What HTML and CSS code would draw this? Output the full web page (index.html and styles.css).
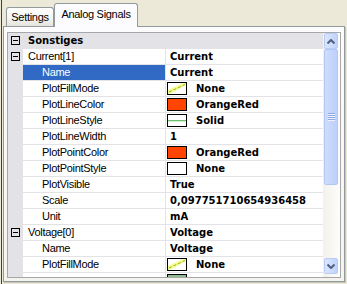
FILE: index.html
```html
<!DOCTYPE html>
<html lang="de">
<head>
  <meta charset="UTF-8">
  <title>Analog Signals</title>
  <link rel="stylesheet" href="styles.css">
</head>
<body>
  <div class="window">
    <!-- Tabs -->
    <div class="tabs">
      <div class="tab">Settings</div>
      <div class="tab active">Analog Signals</div>
    </div>

    <div class="tab-page">
      <div class="prop-grid">
        <div class="rows">
          <div class="row category">
            <div class="margin"><span class="glyph"></span></div>
            <div class="cat-name">Sonstiges</div>
          </div>

          <div class="row">
            <div class="margin"><span class="glyph"></span></div>
            <div class="name parent">Current[1]</div>
            <div class="value">Current</div>
          </div>
          <div class="row">
            <div class="margin"></div>
            <div class="name selected">Name</div>
            <div class="value">Current</div>
          </div>
          <div class="row">
            <div class="margin"></div>
            <div class="name">PlotFillMode</div>
            <div class="value">
              <span class="swatch">
                <svg width="18" height="11" viewBox="0 0 18 11"><polygon points="0,7 15,0 18,0 18,2 2,11 0,11" fill="#f3fb8a"/><line x1="1" y1="9" x2="17" y2="1.5" stroke="#9aae3c" stroke-dasharray="3 2"/></svg>
              </span>None
            </div>
          </div>
          <div class="row">
            <div class="margin"></div>
            <div class="name">PlotLineColor</div>
            <div class="value"><span class="swatch orangered"></span>OrangeRed</div>
          </div>
          <div class="row">
            <div class="margin"></div>
            <div class="name">PlotLineStyle</div>
            <div class="value">
              <span class="swatch">
                <svg width="18" height="11" viewBox="0 0 18 11"><rect y="5" width="18" height="1" fill="#70c070"/><rect y="6" width="18" height="1" fill="#cdeccd"/></svg>
              </span>Solid
            </div>
          </div>
          <div class="row">
            <div class="margin"></div>
            <div class="name">PlotLineWidth</div>
            <div class="value">1</div>
          </div>
          <div class="row">
            <div class="margin"></div>
            <div class="name">PlotPointColor</div>
            <div class="value"><span class="swatch orangered"></span>OrangeRed</div>
          </div>
          <div class="row">
            <div class="margin"></div>
            <div class="name">PlotPointStyle</div>
            <div class="value"><span class="swatch"></span>None</div>
          </div>
          <div class="row">
            <div class="margin"></div>
            <div class="name">PlotVisible</div>
            <div class="value">True</div>
          </div>
          <div class="row">
            <div class="margin"></div>
            <div class="name">Scale</div>
            <div class="value">0,097751710654936458</div>
          </div>
          <div class="row">
            <div class="margin"></div>
            <div class="name">Unit</div>
            <div class="value">mA</div>
          </div>

          <div class="row">
            <div class="margin"><span class="glyph"></span></div>
            <div class="name parent">Voltage[0]</div>
            <div class="value">Voltage</div>
          </div>
          <div class="row">
            <div class="margin"></div>
            <div class="name">Name</div>
            <div class="value">Voltage</div>
          </div>
          <div class="row">
            <div class="margin"></div>
            <div class="name">PlotFillMode</div>
            <div class="value">
              <span class="swatch">
                <svg width="18" height="11" viewBox="0 0 18 11"><polygon points="0,7 15,0 18,0 18,2 2,11 0,11" fill="#f3fb8a"/><line x1="1" y1="9" x2="17" y2="1.5" stroke="#9aae3c" stroke-dasharray="3 2"/></svg>
              </span>None
            </div>
          </div>
          <!-- next row is scrolled out of view, only the colour box shows -->
          <div class="row">
            <div class="margin"></div>
            <div class="name"></div>
            <div class="value"><span class="swatch seagreen"></span></div>
          </div>
        </div>

        <!-- Vertical scrollbar -->
        <div class="scrollbar">
          <div class="sb-btn">
            <svg width="8" height="5" viewBox="0 0 8 5"><polyline points="0.5,4.5 4,1 7.5,4.5" fill="none" stroke="#4d6185" stroke-width="2"/></svg>
          </div>
          <div class="sb-thumb">
            <svg width="7" height="8" viewBox="0 0 7 8"><g fill="#8fa8e8"><rect y="0" width="7" height="1"/><rect y="2" width="7" height="1"/><rect y="4" width="7" height="1"/><rect y="6" width="7" height="1"/></g><g fill="#eef3ff"><rect y="1" width="7" height="1"/><rect y="3" width="7" height="1"/><rect y="5" width="7" height="1"/><rect y="7" width="7" height="1"/></g></svg>
          </div>
          <div class="sb-track"></div>
          <div class="sb-btn">
            <svg width="8" height="5" viewBox="0 0 8 5"><polyline points="0.5,0.5 4,4 7.5,0.5" fill="none" stroke="#4d6185" stroke-width="2"/></svg>
          </div>
        </div>
      </div>
    </div>
  </div>
</body>
</html>
```

FILE: styles.css
```css
/* Base */
* {
  box-sizing: border-box;
}
body {
  margin: 0;
  background-color: #ece9d8;
  font-family: "Liberation Sans", Arial, sans-serif;
  font-size: 11px;
  color: #000;
  overflow: hidden;
}
.window {
  height: 284px;
  margin-left: 1px;
  border-left: 1px solid #3f3f3f;
}

/* Tabs */
.tabs {
  display: flex;
  align-items: flex-end;
  height: 26px;
  padding-left: 4px;
}
.tab {
  width: 48px;
  height: 19px;
  border: 1px solid #919b9c;
  border-bottom: none;
  border-radius: 3px 3px 0 0;
  background: linear-gradient(#ffffff, #f4f4f0 60%, #e4e3dd);
  display: flex;
  align-items: center;
  justify-content: center;
  letter-spacing: -0.3px;
  white-space: nowrap;
}
.tab.active {
  width: 84px;
  height: 24px;
  margin-bottom: -1px;
  padding-bottom: 3px;
  background: #fcfcfe;
  position: relative;
  z-index: 1;
}

/* Tab page */
.tab-page {
  width: 342px;
  height: 256px;
  margin-left: 1px;
  padding: 5px 3px 3px 3px;
  border: 1px solid #919b9c;
  background: linear-gradient(#fcfcfe, #f4f3ee);
  box-shadow: 1px 1px 0 #c9c6b8;
}

/* Property grid */
.prop-grid {
  width: 334px;
  height: 246px;
  border: 1px solid #a7a6aa;
  background: #fff;
  display: flex;
}
.rows {
  width: 315px;
  overflow: hidden;
}
.row {
  display: flex;
  height: 16px;
  border-bottom: 1px solid #e3e2e6;
}
.margin {
  width: 15px;
  flex: none;
  background: #e3e2e6;
  display: flex;
  align-items: center;
  justify-content: center;
}
.glyph {
  width: 9px;
  height: 9px;
  border: 1px solid #000;
  background: linear-gradient(#000, #000) center / 5px 1px no-repeat;
}
.category {
  background: #e3e2e6;
}
.cat-name {
  padding-left: 5px;
  line-height: 15px;
  font: bold 10px "DejaVu Sans", sans-serif;
  display: flex;
  align-items: center;
}
.name {
  width: 143px;
  flex: none;
  padding-left: 19px;
  line-height: 15px;
  border-right: 1px solid #e3e2e6;
  letter-spacing: -0.3px;
  white-space: nowrap;
}
.name.parent {
  padding-left: 5px;
}
.name.selected {
  background: #316ac5;
  color: #fff;
}
.value {
  flex: 1;
  padding-left: 4px;
  font: bold 10px "DejaVu Sans", sans-serif;
  display: flex;
  align-items: center;
  white-space: nowrap;
}
.swatch {
  width: 20px;
  height: 13px;
  flex: none;
  margin: 0 9px 0 -3px;
  border: 1px solid #000;
  background: #fff;
  display: flex;
}
.swatch.orangered {
  background: #ff4500;
}
.swatch.seagreen {
  background: #8fbc8f;
}

/* Scrollbar */
.scrollbar {
  width: 17px;
  flex: none;
  padding: 0 2px 3px 1px;
  background: linear-gradient(to right, #f3f1ec, #fdfdfa);
  display: flex;
  flex-direction: column;
}
.sb-btn {
  height: 16px;
  flex: none;
  border: 1px solid #b9ccf6;
  border-radius: 2px;
  background: linear-gradient(to right, #dbe6fe, #c0d2fb);
  display: flex;
  align-items: center;
  justify-content: center;
}
.sb-thumb {
  height: 136px;
  flex: none;
  border: 1px solid #b3c7f5;
  border-radius: 2px;
  background: linear-gradient(to right, #cfdcfd, #bcd0fb);
  display: flex;
  align-items: center;
  justify-content: center;
}
.sb-track {
  flex: 1;
}
```
